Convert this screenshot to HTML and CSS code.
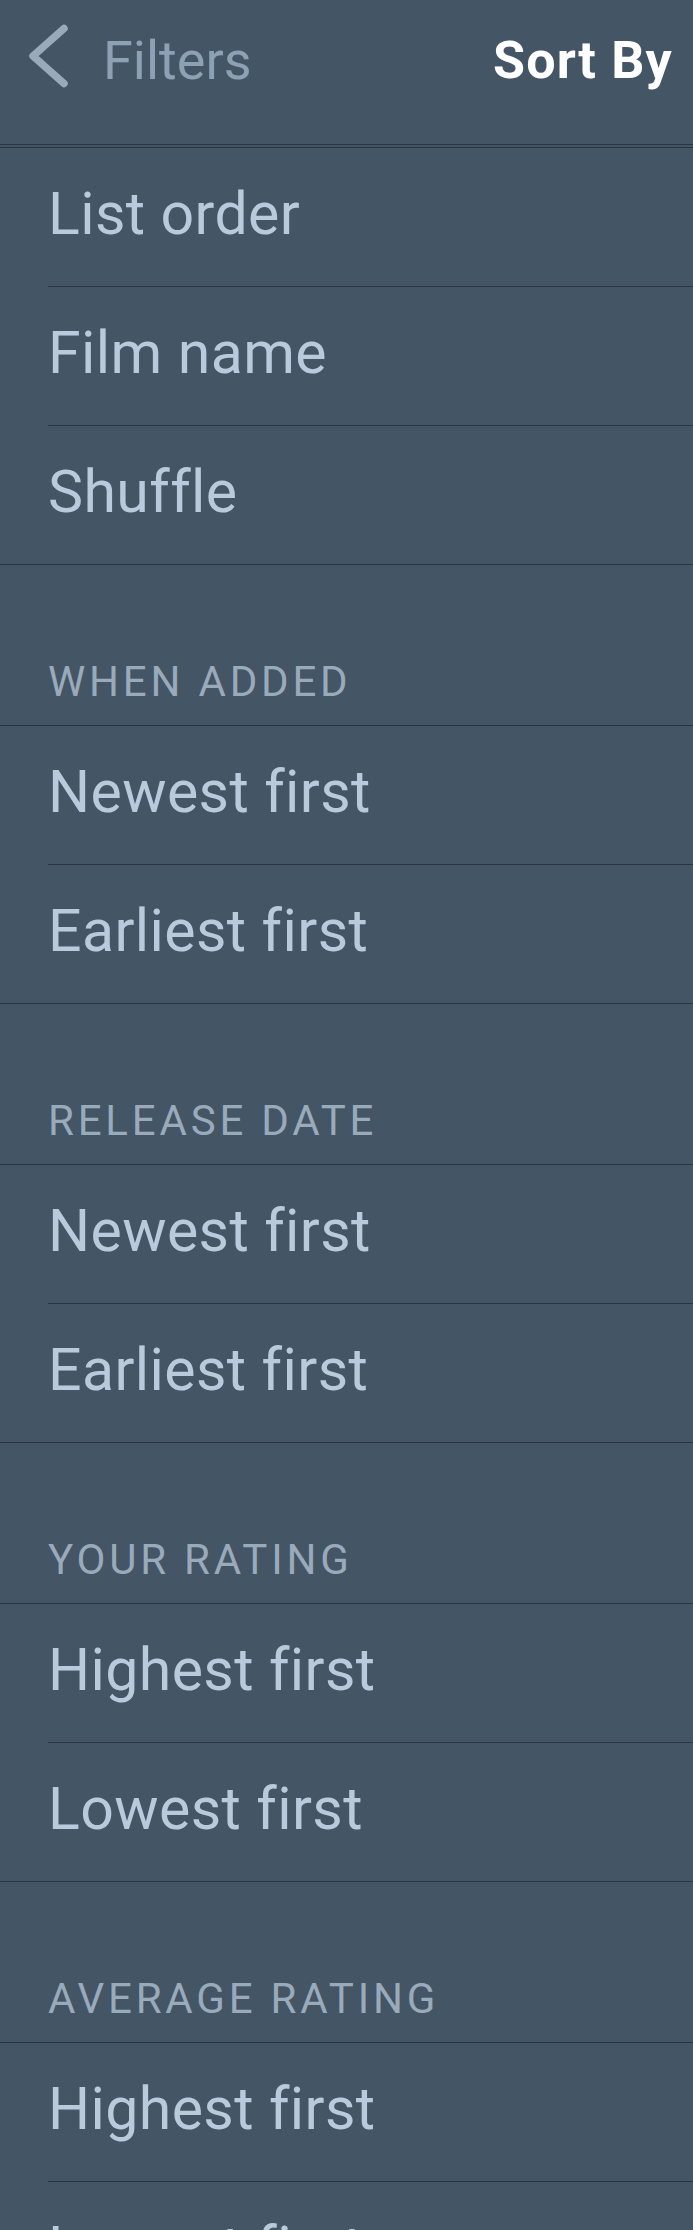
FILE: index.html
```html
<!DOCTYPE html>
<html lang="en">
<head>
    <meta charset="UTF-8">
    <meta name="viewport" content="width=device-width, initial-scale=1.0">
    <title>Sort By</title>
    <link rel="stylesheet" href="styles.css">
</head>
<body>
    <!-- Top bar -->
    <header class="topbar">
        <a class="back" href="#">
            <svg class="back-icon" width="48" height="72" viewBox="0 0 48 72">
                <polyline points="42,8.5 11,36 42,63.5" fill="none" stroke="#99aabb" stroke-width="7.5" stroke-linecap="round" stroke-linejoin="round"/>
            </svg>
            <span class="back-label">Filters</span>
        </a>
        <h1 class="title">Sort By</h1>
    </header>

    <!-- Sort options -->
    <div class="sort-list">
        <div class="group">
            <div class="option"><span class="option-label">List order</span></div>
            <div class="option"><span class="option-label">Film name</span></div>
            <div class="option"><span class="option-label">Shuffle</span></div>
        </div>

        <div class="section-title">When added</div>
        <div class="group">
            <div class="option"><span class="option-label">Newest first</span></div>
            <div class="option"><span class="option-label">Earliest first</span></div>
        </div>

        <div class="section-title">Release date</div>
        <div class="group">
            <div class="option"><span class="option-label">Newest first</span></div>
            <div class="option"><span class="option-label">Earliest first</span></div>
        </div>

        <div class="section-title">Your rating</div>
        <div class="group">
            <div class="option"><span class="option-label">Highest first</span></div>
            <div class="option"><span class="option-label">Lowest first</span></div>
        </div>

        <div class="section-title">Average rating</div>
        <div class="group">
            <div class="option"><span class="option-label">Highest first</span></div>
            <div class="option"><span class="option-label">Lowest first</span></div>
        </div>
    </div>
</body>
</html>
```

FILE: styles.css
```css
body {
    margin: 0;
    background: #445566;
    font-family: Roboto, "Liberation Sans", Arial, sans-serif;
    overflow: hidden;
}
.topbar {
    display: flex;
    justify-content: space-between;
    align-items: center;
    height: 145px;
    box-sizing: border-box;
    padding: 0 20px 22px 22px;
    border-bottom: 1px solid #2c3440;
}
.back {
    display: flex;
    align-items: center;
    gap: 33px;
    text-decoration: none;
}
.back-icon {
    display: block;
    margin-bottom: 10px;
}
.back-label {
    font-size: 54px;
    line-height: 54px;
    color: #8da0b4;
}
.title {
    margin: 0;
    font-size: 52px;
    line-height: 52px;
    font-weight: 700;
    letter-spacing: 1.2px;
    color: #ffffff;
}
.sort-list {
    margin-top: 2px;
    border-top: 1px solid #2c3440;
}
.group {
    border-bottom: 1px solid #2c3440;
}
.option {
    padding-left: 48px;
}
.option-label {
    display: block;
    height: 139px;
    box-sizing: border-box;
    padding-top: 37px;
    font-size: 59px;
    line-height: 58px;
    letter-spacing: 0.4px;
    color: #b8cadc;
    border-bottom: 1px solid #2c3440;
}
.option:last-child .option-label {
    height: 138px;
    border-bottom: none;
}
.section-title {
    display: flex;
    align-items: flex-end;
    height: 161px;
    box-sizing: border-box;
    padding: 0 0 22px 48px;
    font-size: 42px;
    line-height: 42px;
    letter-spacing: 3.8px;
    text-transform: uppercase;
    color: #99aabb;
    border-bottom: 1px solid #2c3440;
}
```
